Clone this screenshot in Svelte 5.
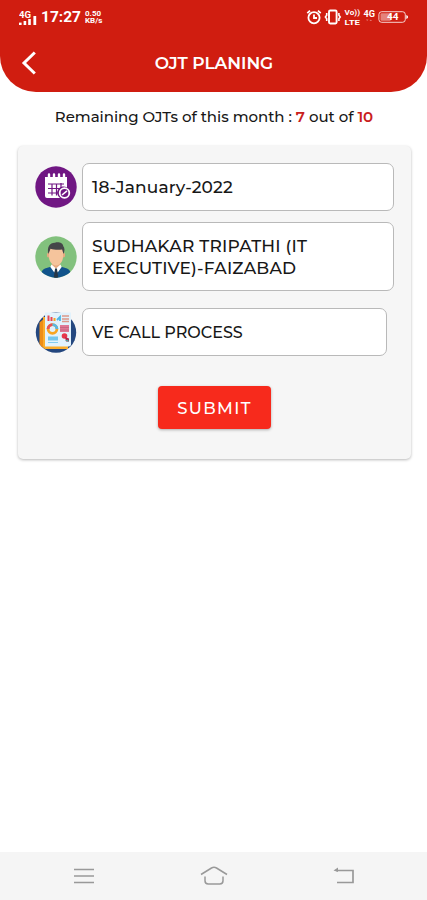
<script>
    let used = 7;
    let total = 10;
    let date = "18-January-2022";
    let employee = ["SUDHAKAR TRIPATHI (IT", "EXECUTIVE)-FAIZABAD"];
    let topic = "VE CALL PROCESS";
</script>

<div class="screen">
    <header>
        <div class="status">
            <svg class="signal" width="19" height="16" viewBox="0 0 19 16" fill="#fff">
                <text x="0" y="6.8" class="tiny" font-size="9" textLength="12" lengthAdjust="spacingAndGlyphs">4G</text>
                <rect x="0" y="11.6" width="2.6" height="2.4" />
                <rect x="4.6" y="10" width="2.6" height="4" />
                <rect x="9.2" y="8" width="2.6" height="6" />
                <rect x="14.4" y="5" width="2.8" height="9" />
            </svg>
            <span class="clock">17:27</span>
            <span class="speed"><span>0.50</span><span>KB/s</span></span>
            <div class="right">
                <svg width="16" height="18" viewBox="0 0 16 18" fill="none" stroke="#fff" stroke-width="1.8">
                    <circle cx="8" cy="9.7" r="5.6" />
                    <path d="M8 6.5V10h3M1.3 5.2 4 2.6M14.7 5.2 12 2.6" />
                </svg>
                <svg width="18" height="18" viewBox="0 0 18 18" fill="none" stroke="#fff" stroke-width="1.9">
                    <rect x="5" y="2.5" width="7.6" height="13" rx="1.2" />
                    <path d="M2.7 5v2.3L1.4 9l1.3 1.7V13M14.9 5v2.3L16.2 9l-1.3 1.7V13" stroke-width="1.6" />
                </svg>
                <svg class="lte" width="17" height="20" viewBox="0 0 17 20" fill="#fff">
                    <text x="0.5" y="8" class="tiny" font-size="7.5" textLength="15.5" lengthAdjust="spacingAndGlyphs">Vo))</text>
                    <text x="0.5" y="17.6" class="tiny" font-size="8" textLength="15.5" lengthAdjust="spacingAndGlyphs">LTE</text>
                </svg>
                <svg class="data" width="13" height="18" viewBox="0 0 13 18" fill="#fff">
                    <text x="0.6" y="9" class="tiny" font-size="9" textLength="11.5" lengthAdjust="spacingAndGlyphs">4G</text>
                    <path d="M3 11.5h2.5L4.2 13zM6.5 13H9l-1.2-1.5z" opacity="0.4" />
                </svg>
                <svg width="31" height="18" viewBox="0 0 31 18">
                    <rect x="0.9" y="3.7" width="26.4" height="10.6" rx="2.8" fill="none" stroke="#fff" stroke-opacity="0.8" />
                    <rect x="2.5" y="5.3" width="10.5" height="7.4" rx="1.2" fill="#fff" opacity="0.45" />
                    <path d="M28.3 7v4l1.6-1V8z" fill="#fff" />
                    <text x="9" y="12.2" class="tiny" font-size="9" fill="#fff" textLength="11.5" lengthAdjust="spacingAndGlyphs">44</text>
                </svg>
            </div>
        </div>
        <div class="title-bar">
            <svg class="back" width="16" height="24" viewBox="0 0 16 24" fill="none" stroke="#fff" stroke-width="3">
                <path d="M13.8 1.5 3 12l10.8 10.5" />
            </svg>
            <h1>OJT PLANING</h1>
        </div>
    </header>

    <p class="remaining">
        Remaining OJTs of this month : <b>{used}</b> out of <b>{total}</b>
    </p>

    <main class="card">
        <div class="row">
            <svg width="42" height="42" viewBox="0 0 42 42">
                <circle cx="21" cy="21" r="20.7" fill="#701783" />
                <path d="M10 11h22v10.5a6 6 0 0 0-7 10.5H12q-2 0-2-2z" fill="#fff" />
                <path d="M14 8.5v6M19 8.5v6M24 8.5v6M29 8.5v6" stroke="#fff" stroke-width="2.4" stroke-linecap="round" />
                <path d="M13 18h16M13 22.5h13M13 27h10M17 18v11.5M21.5 18v11.5M26 17v5" stroke="#701783" stroke-width="1.2" />
                <circle cx="29.5" cy="27" r="4.8" fill="#701783" stroke="#fff" stroke-width="1.8" />
                <path d="m27 29 5-4.2" stroke="#fff" stroke-width="1.6" />
            </svg>
            <div class="field date">{date}</div>
        </div>
        <div class="row person">
            <svg width="42" height="42" viewBox="0 0 42 42">
                <clipPath id="face"><circle cx="21" cy="21" r="20.7" /></clipPath>
                <g clip-path="url(#face)">
                    <rect width="42" height="42" fill="#82c17d" />
                    <path d="M5.5 42c.5-6 1.5-9 6-10l6-1.8h7l6 1.8c4.5 1 5.5 4 6 10z" fill="#11538b" />
                    <path d="M17 25h8v6l-4 4-4-4z" fill="#e6aa81" />
                    <path d="m16.5 28.5 4.5 4 4.5-4 1.2 2.5-4 5.5-1.7-3-1.7 3-4-5.5z" fill="#fff" />
                    <path d="m20 33 1-1 1 1 1.3 9h-4.6z" fill="#263747" />
                    <ellipse cx="13.4" cy="19" rx="1.5" ry="2.6" fill="#e6aa81" />
                    <ellipse cx="28.6" cy="19" rx="1.5" ry="2.6" fill="#e6aa81" />
                    <path d="M14 12h14v9c0 4.5-3.5 8.5-7 8.5S14 25.5 14 21z" fill="#f5c49c" />
                    <path d="M13.5 18C11.5 11 15 6.5 20 6.7c4-1.2 8 .8 8.2 3.2 1.8 2 1.5 5 .3 8.1l-1.4-4.500c-4 .8-8.5.2-11.6-.7z" fill="#454649" />
                </g>
            </svg>
            <div class="field employee">
                {#each employee as line}
                    <span>{line}</span>
                {/each}
            </div>
        </div>
        <div class="row topic-row">
            <svg width="42" height="42" viewBox="0 0 42 42">
                <circle cx="21" cy="21.5" r="20.2" fill="#24477f" />
                <path d="M4.5 11.5 11 6v32L6.5 35.5 4.5 33z" fill="#ee8d16" />
                <path d="M8 6h25v32H11q-3 0-3-3z" fill="#fbad2c" />
                <path d="M10 1.5h26v32q0 2-2 2H10z" fill="#e2f2fc" />
                <path d="M13.5 4.5V10M16.5 6v4" stroke="#e84550" stroke-width="2" />
                <path d="M19.5 7v3" stroke="#f5a623" stroke-width="2" />
                <path d="m22 9 3-3v4" fill="none" stroke="#4cb5e4" stroke-width="1.8" />
                <path d="M27 5h7M27 8h7M27 10.5h7" stroke="#dc9888" stroke-width="1.5" />
                <circle cx="17.5" cy="18" r="4.4" fill="none" stroke="#f7a523" stroke-width="2.8" />
                <path d="M17.5 13.6a4.4 4.4 0 0 0-4.4 4.4" fill="none" stroke="#e65158" stroke-width="2.8" />
                <path d="M17.5 13.6a4.4 4.4 0 0 1 4.4 4.4" fill="none" stroke="#58b8e4" stroke-width="2.8" />
                <path d="M25 14h9v7h-9z" fill="#df7894" />
                <path d="M25 16.5h9M25 19h9" stroke="#bf5c7b" stroke-width=".7" />
                <path d="M13 25.5h10v4H13z" fill="#73c6ed" />
                <path d="M13 31.5h10" stroke="#85cdef" />
                <circle cx="29.5" cy="25" r="2.8" fill="#e7354c" />
                <path d="m30 26 4 1.5v3h-3z" fill="#b8204a" />
                <path d="m30 29.5 3-1 1 2.5z" fill="#45a6a0" />
            </svg>
            <div class="field topic">{topic}</div>
        </div>
        <button type="button">SUBMIT</button>
    </main>

    <nav>
        <svg width="22" height="18" viewBox="0 0 22 18" stroke="#999" stroke-width="1.7">
            <path d="M1 2.5h20M1 9h20M1 15.5h20" />
        </svg>
        <svg width="30" height="22" viewBox="0 0 30 22" fill="none" stroke="#999" stroke-width="1.5">
            <path d="M2 9.5 12.5 3q2.5-1.3 5 0L28 9.5M6 11.5v4.3q0 3.2 3.2 3.2h11.6q3.2 0 3.2-3.2v-4.3" />
        </svg>
        <svg width="22" height="18" viewBox="0 0 22 18" fill="none" stroke="#999" stroke-width="1.7">
            <path d="M3 3.5h17v12H4" />
            <path d="M.5 3.5 5 .5V5z" fill="#999" stroke="none" />
        </svg>
    </nav>
</div>

<style>
    :global(body) {
        margin: 0;
        background: #fff;
    }

    .screen {
        height: 900px;
        display: flex;
        flex-direction: column;
        background: #fff;
        font-family: Montserrat, Inter, sans-serif;
        color: #171717;
    }

    header {
        height: 92px;
        background: #d01d10;
        border-radius: 0 0 36px 36px;
        color: #fff;
    }

    .status {
        height: 34px;
        box-sizing: border-box;
        padding: 0 18px 0 19px;
        display: flex;
        align-items: center;
        font-family: Roboto, sans-serif;
    }

    .signal {
        margin-top: 3px;
    }

    .tiny {
        font-family: Roboto, sans-serif;
        font-weight: 700;
    }

    .clock {
        margin-left: 3px;
        width: 44px;
        font-size: 15.5px;
        font-weight: 700;
    }

    .speed {
        display: flex;
        flex-direction: column;
        font-size: 8px;
        font-weight: 700;
        line-height: 7.5px;
    }

    .right {
        margin-left: auto;
        display: flex;
        align-items: center;
    }

    .right svg + svg {
        margin-left: 2px;
    }

    .title-bar {
        height: 58px;
        display: grid;
        grid-template-columns: 40px 1fr 40px;
        align-items: center;
    }

    .back {
        margin-left: 21px;
    }

    h1 {
        margin: 0;
        padding-left: 1px;
        text-align: center;
        font-size: 17px;
        font-weight: 600;
        letter-spacing: -0.05px;
    }

    .remaining {
        margin: 0;
        height: 54px;
        padding: 15px 0 0 1px;
        box-sizing: border-box;
        text-align: center;
        white-space: nowrap;
        font-size: 15px;
        font-weight: 500;
        line-height: 20px;
        letter-spacing: -0.04px;
    }

    .remaining b {
        color: #c9201d;
        font-weight: 600;
    }

    .card {
        margin: 0 16px 0 18px;
        height: 313px;
        box-sizing: border-box;
        padding: 17px 17px 0;
        display: flex;
        flex-direction: column;
        background: #f6f6f6;
        border-radius: 5px;
        box-shadow: 0 1px 3px rgba(0, 0, 0, 0.28);
    }

    .row {
        display: flex;
        align-items: center;
        gap: 5px;
    }

    .row svg {
        flex: none;
    }

    .person {
        margin-top: 11px;
    }

    .topic-row {
        margin-top: 17px;
        margin-right: 7px;
    }

    .field {
        flex: 1;
        height: 48px;
        box-sizing: border-box;
        padding: 0 9px;
        display: flex;
        flex-direction: column;
        justify-content: center;
        background: #fff;
        border: 1px solid #b9b9b9;
        border-radius: 7px;
        font-size: 17px;
        font-weight: 500;
        line-height: 22px;
        white-space: nowrap;
    }

    .date {
        letter-spacing: 0.15px;
    }

    .employee {
        height: 69px;
        letter-spacing: 0.2px;
    }

    .topic {
        padding-top: 1px;
        font-size: 16px;
    }

    button {
        width: 113px;
        height: 43px;
        margin: 30px auto 0;
        padding: 0;
        background: #f72a1c;
        border: none;
        border-radius: 4px;
        box-shadow: 0 1px 3px rgba(0, 0, 0, 0.3);
        color: #fff;
        font-family: inherit;
        font-size: 16.5px;
        font-weight: 500;
        letter-spacing: 1.4px;
    }

    nav {
        height: 48px;
        margin-top: auto;
        padding: 0 72px 0 73px;
        display: flex;
        align-items: center;
        justify-content: space-between;
        background: #f5f5f5;
    }
</style>
